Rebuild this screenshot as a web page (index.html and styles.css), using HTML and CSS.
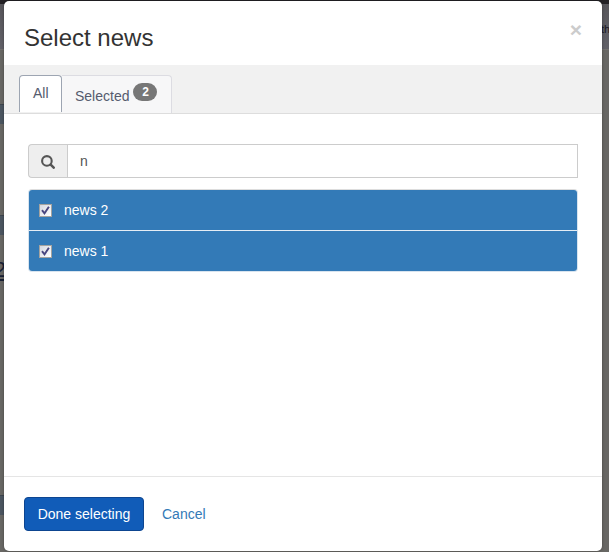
FILE: index.html
```html
<!DOCTYPE html>
<html lang="en">
<head>
<meta charset="utf-8">
<title>Select news</title>
<link rel="stylesheet" href="styles.css">
</head>
<body>
<div class="page">
  <div class="page-top"></div>
  <div class="page-nav"><span>th</span></div>
  <div class="page-body">
    <div class="bar bar-first"></div>
    <div class="bar bar-second"></div>
    <div class="page-count">2</div>
    <div class="bar bar-third"></div>
  </div>
</div>
<div class="modal" role="dialog" aria-labelledby="title">
  <header class="modal-header">
    <h4 id="title">Select news</h4>
    <button class="close" type="button">×</button>
  </header>
  <nav class="tabs">
    <a class="tab active">All</a>
    <a class="tab"><span>Selected</span><span class="badge">2</span></a>
  </nav>
  <main class="modal-body">
    <div class="search">
      <span class="addon">
        <svg width="14" height="14" viewBox="0 0 14 14" fill="none" stroke="#555" stroke-linecap="round"><circle cx="5.9" cy="5.9" r="4.8" stroke-width="2.1"/><path d="M9.7 9.7l3 3" stroke-width="2.5"/></svg>
      </span>
      <div class="input" role="textbox">n</div>
    </div>
    <div class="list">
      <div class="item"><span class="check"><svg width="9" height="9" viewBox="0 0 9 9" fill="none" stroke="#4a4780" stroke-width="1.9"><path d="M1 4.1l2.5 3.2L7.9.8"/></svg></span>news 2</div>
      <div class="item"><span class="check"><svg width="9" height="9" viewBox="0 0 9 9" fill="none" stroke="#4a4780" stroke-width="1.9"><path d="M1 4.1l2.5 3.2L7.9.8"/></svg></span>news 1</div>
    </div>
  </main>
  <footer class="modal-footer">
    <button class="primary" type="button">Done selecting</button>
    <a class="cancel">Cancel</a>
  </footer>
</div>
</body>
</html>
```

FILE: styles.css
```css
* { box-sizing: border-box; }
body {
  margin: 0;
  height: 552px;
  overflow: hidden;
  position: relative;
  font: 14px/20px "Liberation Sans", Arial, sans-serif;
  color: #333;
}
.page {
  height: 552px;
  display: flex;
  flex-direction: column;
  background: #686764;
}
.page-top { height: 4px; background: #232125; }
.page-nav {
  height: 46px;
  background: linear-gradient(#57565b, #626168);
  border-bottom: 1px solid #73716f;
  padding: 15px 0 0 601px;
  font-size: 11px;
  color: #18161f;
  white-space: nowrap;
}
.page-body { flex: 1; display: flow-root; }
.bar { height: 20px; background: #4b5560; border-top: 1px solid #3e464e; width: 4px; }
.bar-first { margin-top: 54px; }
.bar-second { margin-top: 91px; }
.bar-third { margin-top: 214px; }
.page-count {
  margin-top: 24px;
  height: 22px;
  width: 6px;
  display: flex;
  justify-content: flex-end;
  font-size: 22px;
  line-height: 22px;
  text-decoration: underline;
  color: #182034;
}
.modal {
  position: absolute;
  left: 4px;
  top: 1px;
  width: 598px;
  height: 550px;
  display: flex;
  flex-direction: column;
  background: #fff;
  border-radius: 5px;
  box-shadow: 0 0 3px rgba(0, 0, 0, .35);
}
.modal-header {
  height: 64px;
  flex: none;
  display: flex;
  justify-content: space-between;
  padding: 20px 20px 0;
}
h4 { margin: 0; font-size: 24px; font-weight: 400; line-height: 34px; }
.close {
  align-self: flex-start;
  border: 0;
  padding: 0;
  background: none;
  font: bold 21px/18px "Liberation Sans", Arial, sans-serif;
  color: #ccc;
}
.tabs {
  height: 49px;
  flex: none;
  display: flex;
  align-items: flex-end;
  padding-left: 15px;
  background: #f1f1f1;
  border-bottom: 1px solid #ddd;
}
.tab {
  display: flex;
  align-items: flex-start;
  gap: 4px;
  width: 110px;
  height: 38px;
  padding: 10px 0 0 13px;
  border: 1px solid #dcdce2;
  border-left: 0;
  border-bottom: 0;
  border-radius: 0 4px 0 0;
  background: #f7f7f8;
  color: #555b6e;
  white-space: nowrap;
}
.tab.active {
  width: 43px;
  height: 37px;
  margin-bottom: 1px;
  border: 1px solid #9da5b2;
  border-bottom: 0;
  border-radius: 4px 4px 0 0;
  padding: 7px 0 0 13px;
  background: #fff;
}
.badge {
  height: 18px;
  width: 24px;
  margin-top: -3px;
  border-radius: 9px;
  background: #777;
  color: #fff;
  font-size: 12px;
  font-weight: 700;
  line-height: 18px;
  text-align: center;
}
.modal-body { flex: 1; padding: 30px 24px 0; }
.search { display: flex; height: 34px; margin-bottom: 11px; }
.addon {
  width: 39px;
  display: grid;
  place-items: center;
  padding-top: 2px;
  border: 1px solid #ccc;
  border-right: 0;
  border-radius: 4px 0 0 4px;
  background: #eee;
}
.input { flex: 1; border: 1px solid #ccc; padding: 6px 12px; color: #555; }
.list {
  border: 1px solid #d8e4ef;
  border-top-color: #ddd;
  border-radius: 4px;
  overflow: hidden;
  height: 83px;
}
.item {
  display: flex;
  align-items: center;
  height: 40px;
  padding-left: 10px;
  background: #337ab7;
  color: #fff;
}
.item + .item { height: 41px; border-top: 1px solid #e5edf5; }
.check {
  width: 13px;
  height: 13px;
  display: grid;
  place-items: center;
  margin-right: 12px;
  background: linear-gradient(135deg, #d5d8e0, #fff);
  border: 1px solid #a5a39f;
}
.modal-footer {
  height: 75px;
  flex: none;
  display: flex;
  align-items: flex-start;
  border-top: 1px solid #e5e5e5;
  padding: 20px;
}
.primary {
  width: 120px;
  height: 34px;
  padding: 0;
  border: 1px solid #0d4590;
  border-radius: 4px;
  background: #115cb8;
  color: #fff;
  font: inherit;
}
.cancel { padding: 7px 18px; color: #337ab7; }
```
